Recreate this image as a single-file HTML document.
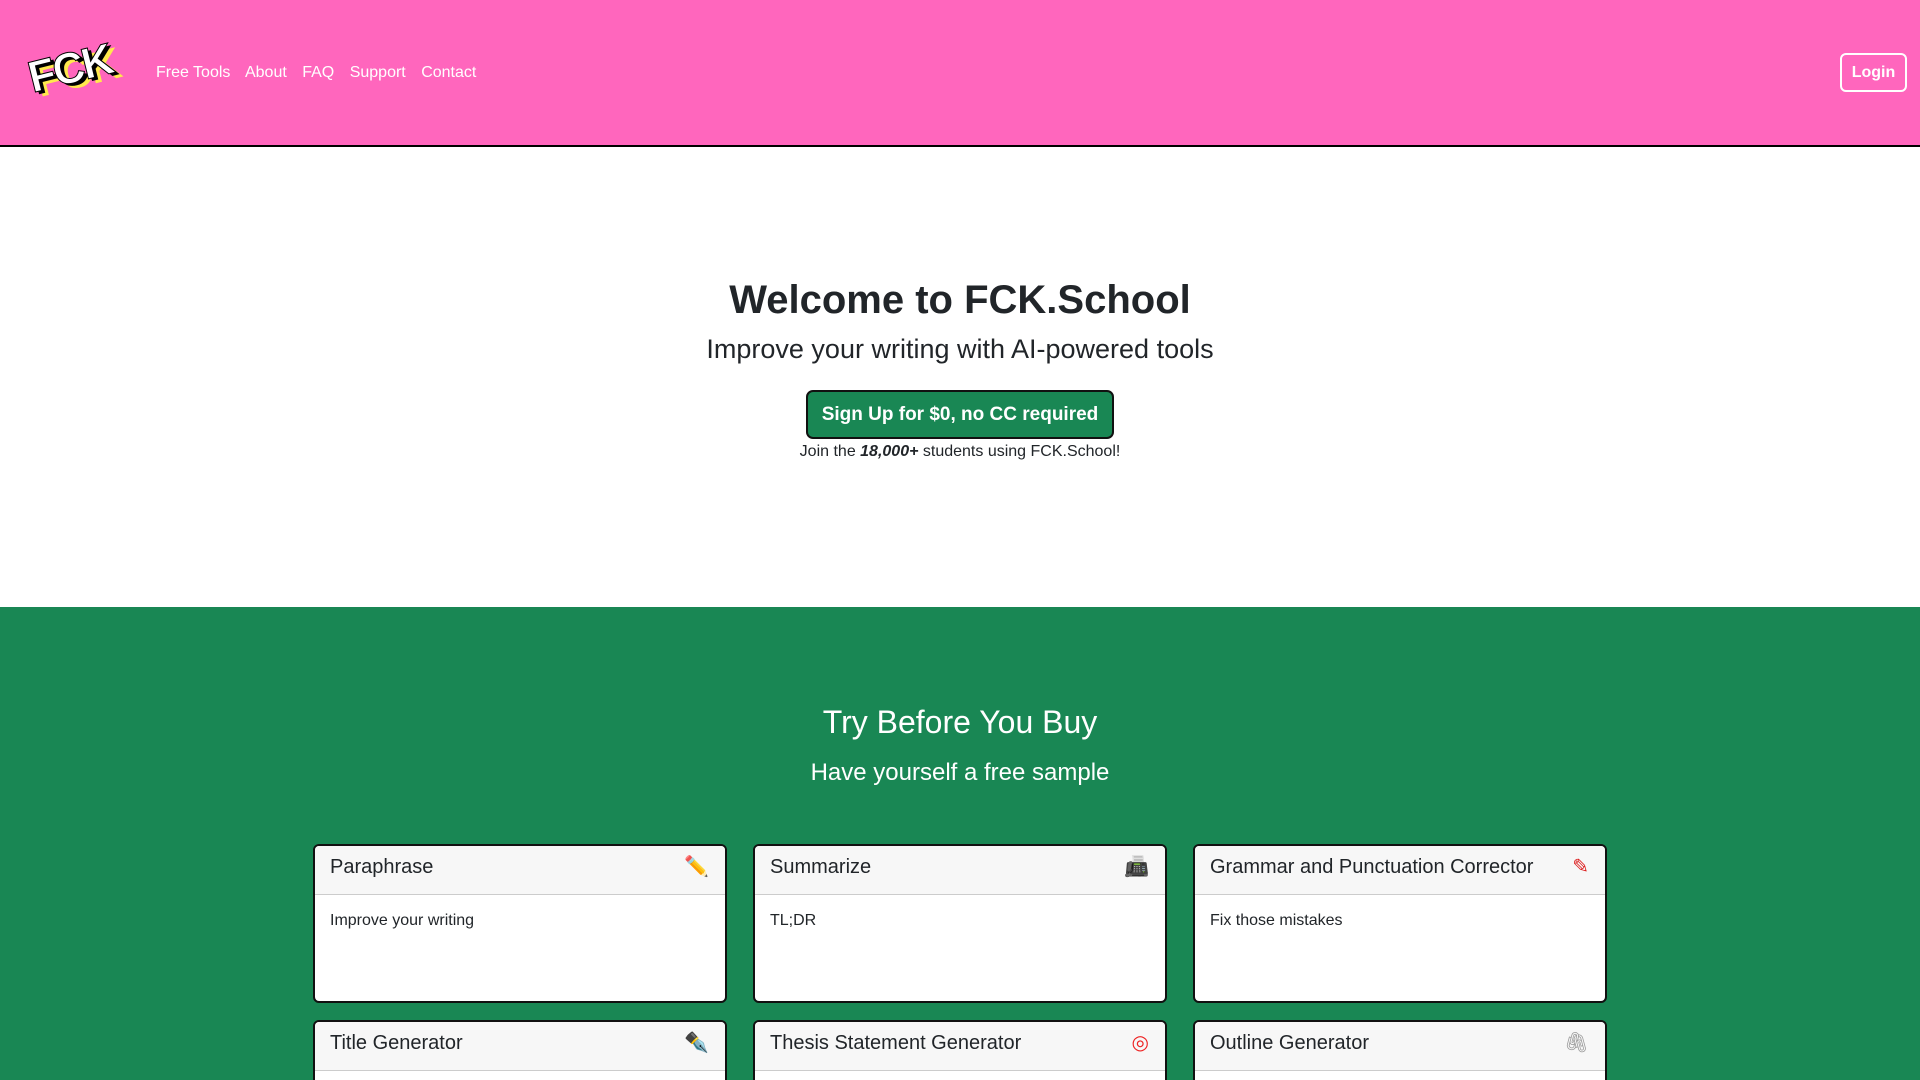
<!DOCTYPE html>
<html><head><meta charset="utf-8"><style>
*{box-sizing:border-box;margin:0;padding:0}
html,body{width:1920px;height:1080px;overflow:hidden}
body{font-family:"Liberation Sans",Roboto,sans-serif;color:#212529;background:#fff;position:relative}
header{position:absolute;left:0;top:0;width:1920px;height:147px;background:#ff66bd;border-bottom:2px solid #000}
.logo{position:absolute;left:28px;top:44px;font:900 44px "Liberation Sans",sans-serif;color:#fff;transform:rotate(-14deg);letter-spacing:-2px;text-shadow:3px 3px 0 #000,6px 6px 0 #ffe94d;-webkit-text-stroke:1px #000}
nav{position:absolute;left:156px;top:64px;font-size:16px;color:#fff;white-space:nowrap}
nav span{margin-right:11px}
.login{position:absolute;left:1840px;top:53px;width:67px;height:39px;border:2px solid #fff;border-radius:6px;color:#fff;font-weight:bold;font-size:16px;text-align:center;line-height:35px}
.c{position:absolute;left:0;width:1920px;text-align:center}
h1{top:278px;font-size:40px;font-weight:bold}
h2{top:334px;font-size:27px;font-weight:normal}
.btn{position:absolute;left:806px;top:390px;width:308px;height:49px;background:#198754;border:2px solid #111;border-radius:7px;color:#fff;font-weight:bold;font-size:19px;line-height:45px;text-align:center}
.join{top:443px;font-size:16px}
.green{position:absolute;top:607px;left:0;width:1920px;height:473px;background:#198754;color:#fff;text-align:center;overflow:hidden}
.g1{position:absolute;width:100%;top:97px;font-size:32px}
.g2{position:absolute;width:100%;top:152px;font-size:24px}
.card{position:absolute;width:414px;height:159px;background:#fff;border:2px solid #111;border-radius:6px;overflow:hidden;text-align:left;color:#212529}
.card .h{height:49px;background:#f7f7f7;border-bottom:1px solid #ccc;padding:0 15px;font-size:20px;line-height:42px;position:relative}
.card .h i{position:absolute;right:16px;top:0;font-style:normal;font-size:20px}
.card .b{padding:17px 15px;font-size:16px}
</style></head><body>
<header>
<div class="logo">FCK</div>
<nav><span>Free Tools</span> <span>About</span> <span>FAQ</span> <span>Support</span> <span>Contact</span></nav>
<div class="login">Login</div>
</header>
<h1 class="c">Welcome to FCK.School</h1>
<h2 class="c">Improve your writing with AI-powered tools</h2>
<div class="btn">Sign Up for $0, no CC required</div>
<div class="c join">Join the <b><i>18,000+</i></b> students using FCK.School!</div>
<div class="green">
<div class="g1">Try Before You Buy</div>
<div class="g2">Have yourself a free sample</div>
<div class="card" style="left:313px;top:237px"><div class="h">Paraphrase<i>✏️</i></div><div class="b">Improve your writing</div></div>
<div class="card" style="left:753px;top:237px"><div class="h">Summarize<i>📠</i></div><div class="b">TL;DR</div></div>
<div class="card" style="left:1193px;top:237px"><div class="h">Grammar and Punctuation Corrector<i style="color:#d22">✎</i></div><div class="b">Fix those mistakes</div></div>
<div class="card" style="left:313px;top:413px"><div class="h">Title Generator<i>✒️</i></div><div class="b"></div></div>
<div class="card" style="left:753px;top:413px"><div class="h">Thesis Statement Generator<i style="color:#e22">◎</i></div><div class="b"></div></div>
<div class="card" style="left:1193px;top:413px"><div class="h">Outline Generator<i style="color:#999">🖇</i></div><div class="b"></div></div>
</div>
</body></html>
